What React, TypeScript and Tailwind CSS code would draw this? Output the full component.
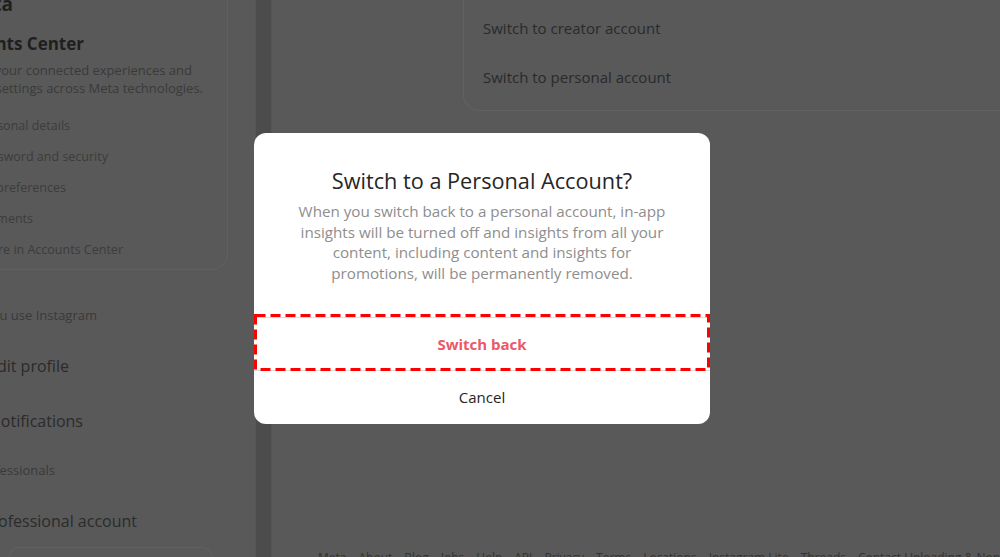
const font = "font-['Open_Sans','Noto_Sans',sans-serif]";

function Clipped({ end, className, children }: { end: string; className?: string; children: React.ReactNode }) {
  // text whose start is scrolled off the left edge: right edge pinned at `end`
  return (
    <div className={`flex shrink-0 justify-end whitespace-nowrap ${end} ${className ?? ""}`}>
      <span>{children}</span>
    </div>
  );
}

function Sidebar() {
  return (
    <aside className="flex w-[255px] shrink-0 flex-col overflow-hidden">
      <div className="mr-[27px] h-[270px] shrink-0 rounded-br-2xl border-r border-b border-[#606060]">
        <Clipped end="w-[13px]" className="-mt-[7px] h-[22px] text-[19px] leading-[22px] font-bold text-[#202020]">
          Meta
        </Clipped>
        <Clipped end="w-[84px]" className="mt-[18px] text-[17px] leading-[22px] font-bold text-[#1f1f1f]">
          Accounts Center
        </Clipped>
        <div className="mt-[6px] text-[13px] leading-[18px] text-[#3a3a3a]">
          <Clipped end="w-[192px]">Manage your connected experiences and</Clipped>
          <Clipped end="w-[203px]">account settings across Meta technologies.</Clipped>
        </div>
        <div className="mt-[14px] text-[12.5px] text-[#3c3c3c]">
          <Clipped end="w-[70px]" className="h-[31px] items-center">Personal details</Clipped>
          <Clipped end="w-[108px]" className="h-[31px] items-center">Password and security</Clipped>
          <Clipped end="w-[66px]" className="h-[31px] items-center">Ad preferences</Clipped>
          <Clipped end="w-[33px]" className="h-[31px] items-center">Payments</Clipped>
          <Clipped end="w-[123px]" className="h-[31px] items-center">See more in Accounts Center</Clipped>
        </div>
      </div>
      <Clipped end="w-[97px]" className="mt-[36px] h-[20px] items-center text-[13px] text-[#3a3a3a]">
        How you use Instagram
      </Clipped>
      <Clipped end="w-[69px]" className="mt-[28px] h-[24px] items-center text-[16px] text-[#2b2b2b]">
        Edit profile
      </Clipped>
      <Clipped end="w-[83px]" className="mt-[31px] h-[24px] items-center text-[16px] text-[#2b2b2b]">
        Notifications
      </Clipped>
      <Clipped end="w-[55px]" className="mt-[28px] h-[20px] items-center text-[13px] text-[#3a3a3a]">
        For professionals
      </Clipped>
      <Clipped end="w-[137px]" className="mt-[28px] h-[24px] items-center text-[16px] text-[#2b2b2b]">
        Professional account
      </Clipped>
      <div className="mt-[14px] ml-[8px] h-[20px] w-[205px] shrink-0 rounded-t-xl border-x border-t border-[#616161]" />
    </aside>
  );
}

function Dialog() {
  return (
    <div className="relative w-[456px] overflow-hidden rounded-xl bg-white">
      <div className="px-[20px] pt-[35px] pb-[34px] text-center">
        <h2 className="text-[21.7px] leading-[26px] text-[#262626]">Switch to a Personal Account?</h2>
        <p className="mt-[7px] text-[15.2px] leading-[20.5px] text-[#8e8e8e]">
          When you switch back to a personal account, in-app
          <br />
          insights will be turned off and insights from all your
          <br />
          content, including content and insights for
          <br />
          promotions, will be permanently removed.
        </p>
      </div>
      <button className="flex h-[53px] w-full items-center justify-center border-t border-[#f6cfd2] text-[15px] font-bold text-[#ec5867]">
        Switch back
      </button>
      <button className="flex h-[54px] w-full items-center justify-center border-t border-[#dbdbdb] text-[15px] text-[#262626]">
        Cancel
      </button>
      {/* annotation box */}
      <svg className="absolute top-[181px] left-0 h-[57px] w-[456px]" viewBox="0 0 456 57">
        <rect x="1.5" y="1.5" width="453" height="54" fill="none" stroke="#ff0000" strokeWidth="3" strokeDasharray="10 5" />
      </svg>
    </div>
  );
}

export default function App() {
  return (
    <div className={`relative h-[557px] w-[1000px] overflow-hidden bg-[#595959] ${font}`}>
      <div className="flex h-full">
        <Sidebar />
        <div className="w-[17px] shrink-0 border-x border-[#555] bg-[#4c4c4c]" />
        <main className="flex flex-1 flex-col overflow-hidden">
          <div className="flex-1">
            <div className="ml-[191px] w-[600px] rounded-b-2xl border-x border-b border-[#626262] px-[19px] pt-[4px] pb-[8px] text-[15px] text-[#2a2a2a]">
              <div className="flex h-[49px] items-center">Switch to creator account</div>
              <div className="flex h-[49px] items-center">Switch to personal account</div>
            </div>
          </div>
          <footer className="h-[7px] overflow-hidden pl-[46px] text-[12px] leading-[16px] whitespace-nowrap text-[#333]">
            <span className="flex gap-[12px]">
              <span>Meta</span>
              <span>About</span>
              <span>Blog</span>
              <span>Jobs</span>
              <span>Help</span>
              <span>API</span>
              <span>Privacy</span>
              <span>Terms</span>
              <span>Locations</span>
              <span>Instagram Lite</span>
              <span>Threads</span>
              <span>Contact Uploading &amp; Non-Users</span>
              <span>Meta Verified</span>
            </span>
          </footer>
        </main>
      </div>
      <div className="absolute inset-0 flex items-center pl-[254px]">
        <Dialog />
      </div>
    </div>
  );
}
